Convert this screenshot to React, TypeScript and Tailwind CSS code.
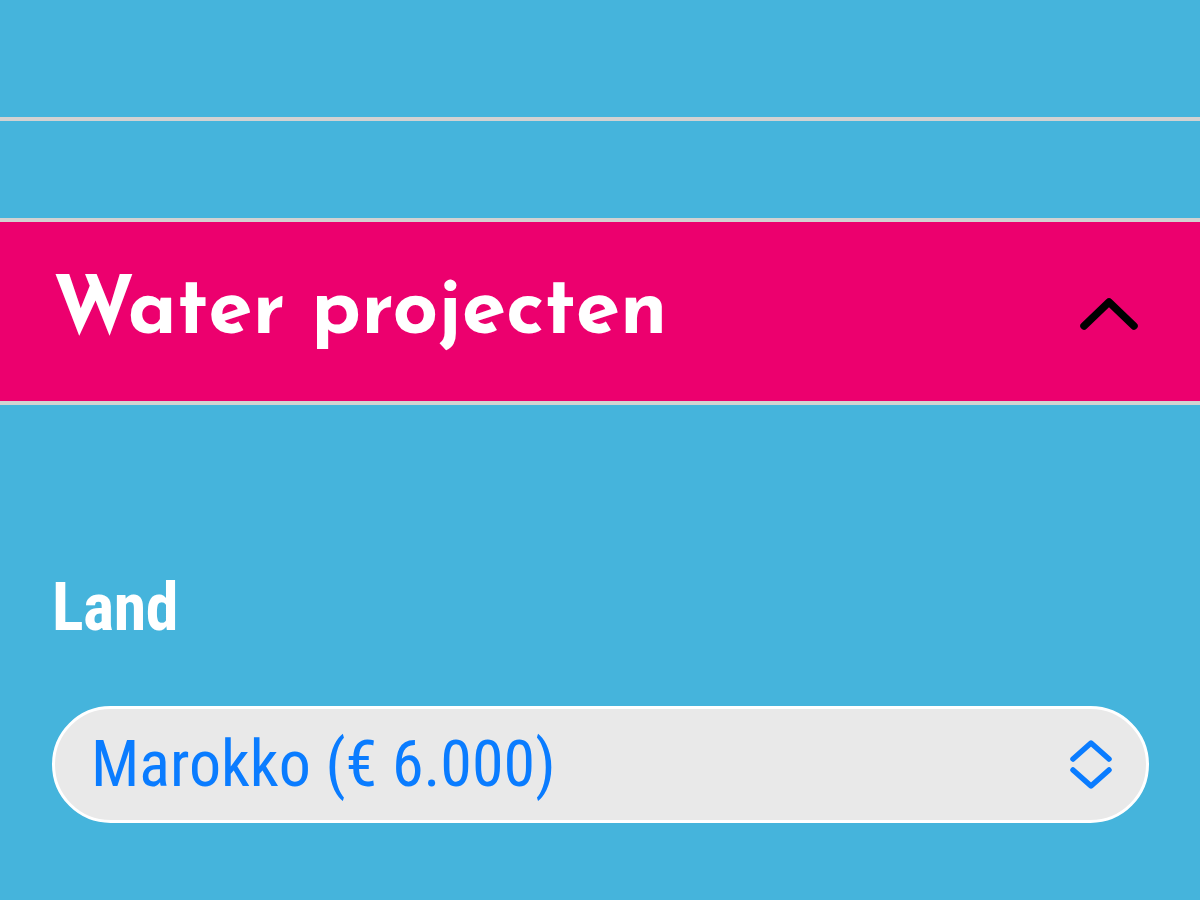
export default function App() {
  return (
    <div className="w-[1200px] h-[900px] bg-[#45b4dc] overflow-hidden">
      <div className="h-[117px]" />
      <div className="h-[4px] bg-[#d2d2d2]" />
      <div className="h-[97px]" />
      <div className="h-[4px] bg-[#d2d2d2]" />
      <div className="h-[179px] bg-[#ec006e] flex items-center justify-between pl-[53px] pr-[62px]">
        <h2 className="text-white text-[80px] leading-none font-bold font-['Josefin_Sans','Lato',sans-serif] pt-[2px]">
          Water projecten
        </h2>
        <svg width="58" height="32" viewBox="0 0 58 32" fill="none" className="mt-[4px]">
          <path d="M4 28 L29 4 L54 28" stroke="#000" strokeWidth="7.5" strokeLinecap="round" strokeLinejoin="round" />
        </svg>
      </div>
      <div className="h-[4px] bg-[#d2d2d2]" />
      <div className="px-[52px] pt-[170px]">
        <label className="block text-white font-bold text-[66px] tracking-[-0.5px] leading-none font-['Roboto_Condensed',sans-serif]">
          Land
        </label>
        <div className="mt-[65px] h-[117px] w-[1097px] rounded-full border-[3px] border-white bg-[#e9e9e9] flex items-center justify-between pl-[36px] pr-[34px]">
          <span className="text-[#0a7cff] text-[64px] leading-none font-['Roboto_Condensed',sans-serif]">
            Marokko (€ 6.000)
          </span>
          <svg width="42" height="51" viewBox="0 0 42 51" fill="none">
            <path d="M3 20 L21 4 L39 20" stroke="#0a7cff" strokeWidth="5.5" strokeLinecap="round" strokeLinejoin="round" />
            <path d="M3 31 L21 47 L39 31" stroke="#0a7cff" strokeWidth="5.5" strokeLinecap="round" strokeLinejoin="round" />
          </svg>
        </div>
      </div>
    </div>
  );
}
